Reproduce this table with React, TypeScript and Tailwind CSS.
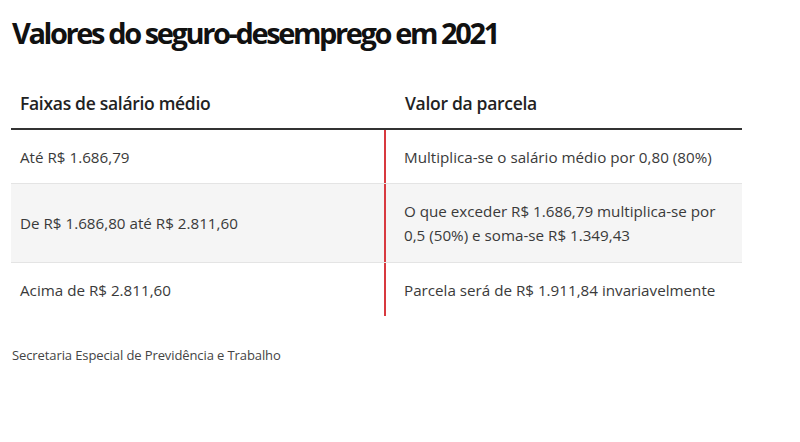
import React from "react";

const rows = [
  { faixa: "Até R$ 1.686,79", valor: "Multiplica-se o salário médio por 0,80 (80%)" },
  {
    faixa: "De R$ 1.686,80 até R$ 2.811,60",
    valor: "O que exceder R$ 1.686,79 multiplica-se por 0,5 (50%) e soma-se R$ 1.349,43",
  },
  { faixa: "Acima de R$ 2.811,60", valor: "Parcela será de R$ 1.911,84 invariavelmente" },
];

const App = () => {
  return (
    <div className="w-[800px] h-[442px] bg-white font-['Open_Sans',sans-serif] text-[#333]">
      <h1 className="pl-[12px] pt-[14px] text-[29px] leading-[38px] font-bold tracking-[-2.4px] text-[#111]">
        Valores do seguro-desemprego em 2021
      </h1>
      <div className="ml-[11px] mt-[38px] w-[731px]">
        <div className="flex h-[40px] items-start border-b-2 border-[#333] text-[17.5px] font-semibold text-[#222] tracking-[-0.3px]">
          <div className="w-[375px] pl-[9px]">Faixas de salário médio</div>
          <div className="flex-1 pl-[19px]">Valor da parcela</div>
        </div>
        {rows.map((row, i) => (
          <div
            key={i}
            className={
              "flex items-stretch text-[15.2px] leading-[24px] text-[#3a3a3a] " +
              (i === 1 ? "bg-[#f5f5f5] border-y border-[#e4e4e4]" : "bg-white")
            }
          >
            <div className="w-[375px] pl-[9px] flex items-center border-r-2 border-[#d8393f]">
              {row.faixa}
            </div>
            <div
              className={
                "flex-1 pl-[18px] pr-[10px] flex items-center " +
                (i === 1 ? "h-[78px]" : "h-[53px]")
              }
            >
              {row.valor}
            </div>
          </div>
        ))}
      </div>
      <p className="pl-[12px] mt-[30px] text-[13px] text-[#444] tracking-[-0.1px]">
        Secretaria Especial de Previdência e Trabalho
      </p>
    </div>
  );
};

export default App;
